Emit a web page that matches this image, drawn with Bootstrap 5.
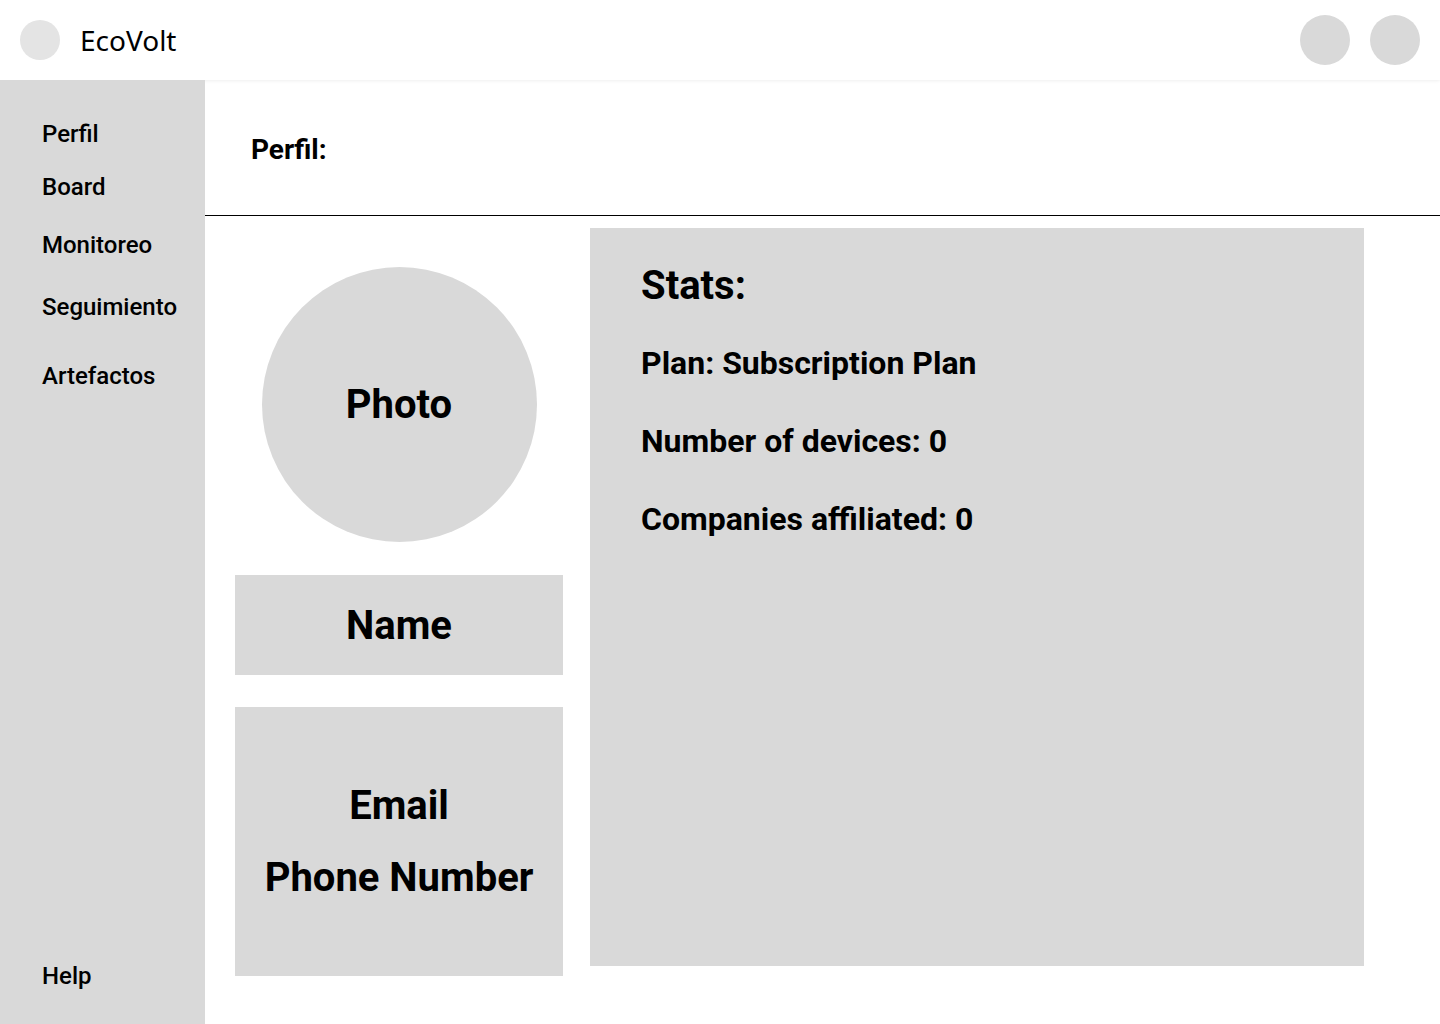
<!DOCTYPE html>
<html lang="es">
<head>
<meta charset="utf-8">
<meta name="viewport" content="width=device-width, initial-scale=1">
<title>EcoVolt</title>
<link href="https://cdn.jsdelivr.net/npm/bootstrap@5.3.0/dist/css/bootstrap.min.css" rel="stylesheet">
<style>
body{font-family:Roboto,"Liberation Sans",sans-serif;color:#000;background:#fff}
.tone{background:#d9d9d9}
.topbar{height:80px;padding:0 20px;box-shadow:0 0 4px rgba(0,0,0,.1)}
.brand-name{font-family:"Noto Sans",sans-serif;font-size:28px;line-height:40px;color:#000;gap:20px}
.brand-dot{width:40px;height:40px;background:#e4e4e4}
.top-actions{gap:20px}
.round-btn{width:50px;height:50px}
.side{width:205px;padding:40px 0 34px 42px}
.side a{font-size:24px;line-height:28px;font-weight:500;color:#000;text-decoration:none}
.side .gap-s{margin-bottom:25px}
.side .gap-m{margin-bottom:30px}
.side .gap-l{margin-bottom:34px}
.side .gap-xl{margin-bottom:41px}
.page-head{padding:54px 46px 49px;border-bottom:1px solid #000}
.page-head h1{font-size:28px;line-height:32px;font-weight:700;margin:0}
.content-area{padding:12px 76px 48px 30px;gap:27px}
.profile-col{width:328px;padding-top:39px}
.photo{width:275px;height:275px}
.big{font-size:40px;line-height:47px;font-weight:700;margin:0}
.name-box{height:100px;margin:33px 0 32px}
.contact-box{height:269px;gap:25px}
.stats-box{padding:34px 51px;min-height:738px}
.stats-box p{font-size:32px;line-height:38px;font-weight:700;margin:0 0 40px}
.stats-box .big{margin-bottom:35px}
</style>
</head>
<body class="min-vh-100 d-flex flex-column">
<header class="topbar d-flex align-items-center justify-content-between">
<a class="brand-name d-flex align-items-center text-decoration-none" href="#"><span class="brand-dot rounded-circle"></span>EcoVolt</a>
<div class="top-actions d-flex">
<button type="button" class="round-btn tone rounded-circle border-0" aria-label="Notificaciones"></button>
<button type="button" class="round-btn tone rounded-circle border-0" aria-label="Cuenta"></button>
</div>
</header>
<div class="d-flex flex-grow-1">
<nav class="side tone flex-shrink-0 d-flex flex-column">
<a href="#" class="gap-s">Perfil</a>
<a href="#" class="gap-m">Board</a>
<a href="#" class="gap-l">Monitoreo</a>
<a href="#" class="gap-xl">Seguimiento</a>
<a href="#">Artefactos</a>
<a href="#" class="mt-auto">Help</a>
</nav>
<main class="flex-grow-1">
<div class="page-head"><h1>Perfil:</h1></div>
<div class="content-area d-flex align-items-start">
<section class="profile-col flex-shrink-0">
<div class="photo tone rounded-circle mx-auto d-flex align-items-center justify-content-center"><h2 class="big">Photo</h2></div>
<div class="name-box tone d-flex align-items-center justify-content-center"><h2 class="big">Name</h2></div>
<div class="contact-box tone d-flex flex-column align-items-center justify-content-center"><p class="big">Email</p><p class="big">Phone Number</p></div>
</section>
<section class="stats-box tone flex-grow-1">
<h2 class="big">Stats:</h2>
<p>Plan: Subscription Plan</p>
<p>Number of devices: 0</p>
<p>Companies affiliated: 0</p>
</section>
</div>
</main>
</div>
<script src="https://cdn.jsdelivr.net/npm/bootstrap@5.3.0/dist/js/bootstrap.bundle.min.js"></script>
</body>
</html>
